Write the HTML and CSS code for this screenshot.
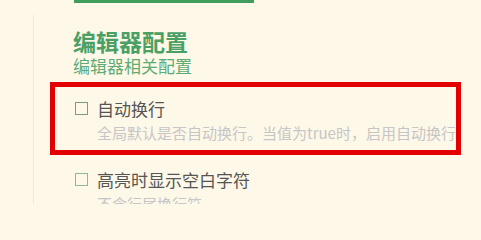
FILE: index.html
```html
<!DOCTYPE html>
<html lang="zh">
<head>
<meta charset="utf-8">
<link rel="stylesheet" href="styles.css">
</head>
<body>
<div class="page">
  <div class="topbar"><div class="btn"></div></div>
  <div class="panel">
    <h2 class="heading">编辑器配置</h2>
    <div class="subtitle">编辑器相关配置</div>
    <div class="items">
      <div class="item item-first">
        <div class="row">
          <span class="check"></span>
          <div class="texts">
            <div class="title">自动换行</div>
            <div class="desc">全局默认是否自动换行。当值为true时，启用自动换行</div>
          </div>
        </div>
        <div class="highlight"></div>
      </div>
      <div class="item">
        <div class="row">
          <span class="check check-light"></span>
          <div class="texts">
            <div class="title">高亮时显示空白字符</div>
            <div class="desc">不含行尾换行符</div>
          </div>
        </div>
      </div>
    </div>
  </div>
</div>
</body>
</html>
```

FILE: styles.css
```css
html, body {
  margin: 0;
  padding: 0;
  background: #fdf8e8;
  overflow: hidden;
}
.page {
  width: 481px;
  height: 204px;
  overflow: hidden;
  font-family: "Noto Sans CJK SC", "Noto Sans", sans-serif;
}
.topbar {
  padding-left: 74px;
  height: 15px;
}
.btn {
  width: 180px;
  height: 3px;
  background: #3f9d5e;
}
.panel {
  margin-left: 33px;
  border-left: 1px solid #efe8d3;
  padding-left: 39px;
  padding-top: 14px;
  height: 200px;
}
.heading {
  margin: 0;
  font-size: 23px;
  line-height: 25px;
  font-weight: 700;
  color: #4aa064;
}
.subtitle {
  margin-top: 3px;
  font-size: 17px;
  line-height: 18px;
  color: #5fab75;
}
.items {
  margin-top: 25px;
  display: flex;
  flex-direction: column;
  gap: 31px;
}
.item {
  position: relative;
}
.row {
  display: flex;
  align-items: flex-start;
  padding-left: 2px;
}
.check {
  flex: none;
  width: 13px;
  height: 13px;
  box-sizing: border-box;
  border: 1px solid #7f9a7f;
  margin-top: 2px;
  margin-right: 9px;
}
.check-light {
  border-color: #8fb89a;
}
.texts {
  display: flex;
  flex-direction: column;
  gap: 8px;
  white-space: nowrap;
}
.title {
  font-size: 17px;
  line-height: 17px;
  color: #555555;
}
.desc {
  font-size: 15px;
  line-height: 15px;
  color: #c6c6c6;
}
.highlight {
  position: absolute;
  left: -23px;
  top: -18px;
  width: 411px;
  height: 73px;
  box-sizing: border-box;
  border: 5px solid #e30000;
}
```
